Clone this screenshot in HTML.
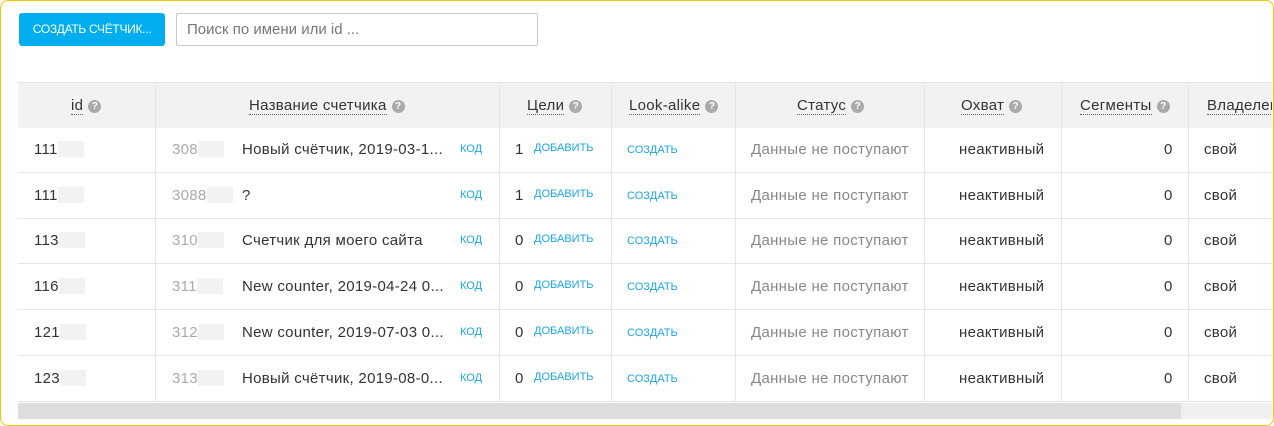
<!DOCTYPE html>
<html><head><meta charset="utf-8"><style>
*{box-sizing:border-box;margin:0;padding:0}
body{width:1274px;height:426px;background:#fff;font-family:"Liberation Sans",sans-serif;position:relative;overflow:hidden}
.frame{position:absolute;left:0;top:0;width:1274px;height:426px;border:1.5px solid #f2c500;border-radius:8px}
.btn{position:absolute;left:19px;top:13px;width:146px;height:33px;background:#00aef0;border-radius:3px;color:#fff;font-size:12px;line-height:33px;text-align:center;letter-spacing:-0.3px}
.search{position:absolute;left:176px;top:13px;width:362px;height:33px;border:1px solid #c8c8c8;border-radius:2px;font-size:15px;color:#777;padding-left:10px;line-height:31px}
.wrap{position:absolute;left:18px;top:82px;width:1254px;height:320px;overflow:hidden;border-top:1px solid #e4e4e4}
.c{position:absolute;height:100%;border-left:1px solid #e6e6e6}
.hd{position:absolute;left:0;top:0;width:1300px;height:45px;background:#f2f2f2}
.row{position:absolute;left:0;width:1300px;height:46px;border-bottom:1px solid #e6e6e6}
.t{position:absolute;font-size:15px;letter-spacing:0.3px;white-space:nowrap;color:#333}
.h{position:absolute;top:14px;font-size:15px;letter-spacing:0.3px;color:#333;white-space:nowrap}
.h u{text-decoration:none;border-bottom:1px dotted #666}
.q{display:inline-block;width:13px;height:13px;border-radius:50%;background:#aaa;color:#fff;font-size:10px;letter-spacing:0;line-height:13px;text-align:center;font-weight:bold;margin-left:5px;vertical-align:1px}
.blur{display:inline-block;width:26px;height:16px;background:#f2f2f2;vertical-align:-3px}
.lnk{color:#1aa6e8;font-size:11px;letter-spacing:0}
.scroll{position:absolute;left:18px;top:403px;width:1254px;height:16px;background:#f0f0f0}
.thumb{position:absolute;left:0;top:0;width:1163px;height:16px;background:#dedede}
</style></head><body>
<div class="frame"></div>
<div class="btn">СОЗДАТЬ СЧЁТЧИК...</div>
<div class="search">Поиск по имени или id ...</div>
<div class="wrap">
<div class="hd"></div>
<div class="c" style="left:137px"></div><div class="c" style="left:481px"></div><div class="c" style="left:593px"></div><div class="c" style="left:717px"></div><div class="c" style="left:906px"></div><div class="c" style="left:1043px"></div><div class="c" style="left:1170px"></div>
<div class="h" style="left:53px"><u>id</u><span class="q">?</span></div>
<div class="h" style="left:231px"><u>Название счетчика</u><span class="q">?</span></div>
<div class="h" style="left:509px"><u>Цели</u><span class="q">?</span></div>
<div class="h" style="left:611px"><u>Look-alike</u><span class="q">?</span></div>
<div class="h" style="left:779px"><u>Статус</u><span class="q">?</span></div>
<div class="h" style="left:943px"><u>Охват</u><span class="q">?</span></div>
<div class="h" style="left:1062px"><u>Сегменты</u><span class="q">?</span></div>
<div class="h" style="left:1189px"><u>Владелец</u></div>
<div id="rows"></div>
</div>
<div class="scroll"><div class="thumb"></div></div>
<script>
var d=[["111","308","Новый счётчик, 2019-03-1...","1"],["111","3088","?","1"],["113","310","Счетчик для моего сайта","0"],["116","311","New counter, 2019-04-24 0...","0"],["121","312","New counter, 2019-07-03 0...","0"],["123","313","Новый счётчик, 2019-08-0...","0"]];
var h="";d.forEach(function(r,i){var y=44+i*45.7;
h+='<div class="row" style="top:'+y+'px"></div>';var ty=y+14;
h+='<div class="t" style="top:'+ty+'px;left:16px">'+r[0]+'<span class="blur"></span></div>';
h+='<div class="t" style="top:'+ty+'px;left:154px;color:#aaa">'+r[1]+'<span class="blur"></span></div>';
h+='<div class="t" style="top:'+ty+'px;left:224px">'+r[2]+'</div>';
h+='<div class="t lnk" style="top:'+(ty+2)+'px;left:442px">КОД</div>';
h+='<div class="t" style="top:'+ty+'px;left:497px">'+r[3]+'</div>';
h+='<div class="t lnk" style="top:'+(ty+1)+'px;left:516px">ДОБАВИТЬ</div>';
h+='<div class="t lnk" style="top:'+(ty+3)+'px;left:609px">СОЗДАТЬ</div>';
h+='<div class="t" style="top:'+ty+'px;left:733px;color:#888">Данные не поступают</div>';
h+='<div class="t" style="top:'+ty+'px;left:941px">неактивный</div>';
h+='<div class="t" style="top:'+ty+'px;left:1146px">0</div>';
h+='<div class="t" style="top:'+ty+'px;left:1186px">свой</div>';});
document.getElementById("rows").innerHTML=h;
</script>
</body></html>
